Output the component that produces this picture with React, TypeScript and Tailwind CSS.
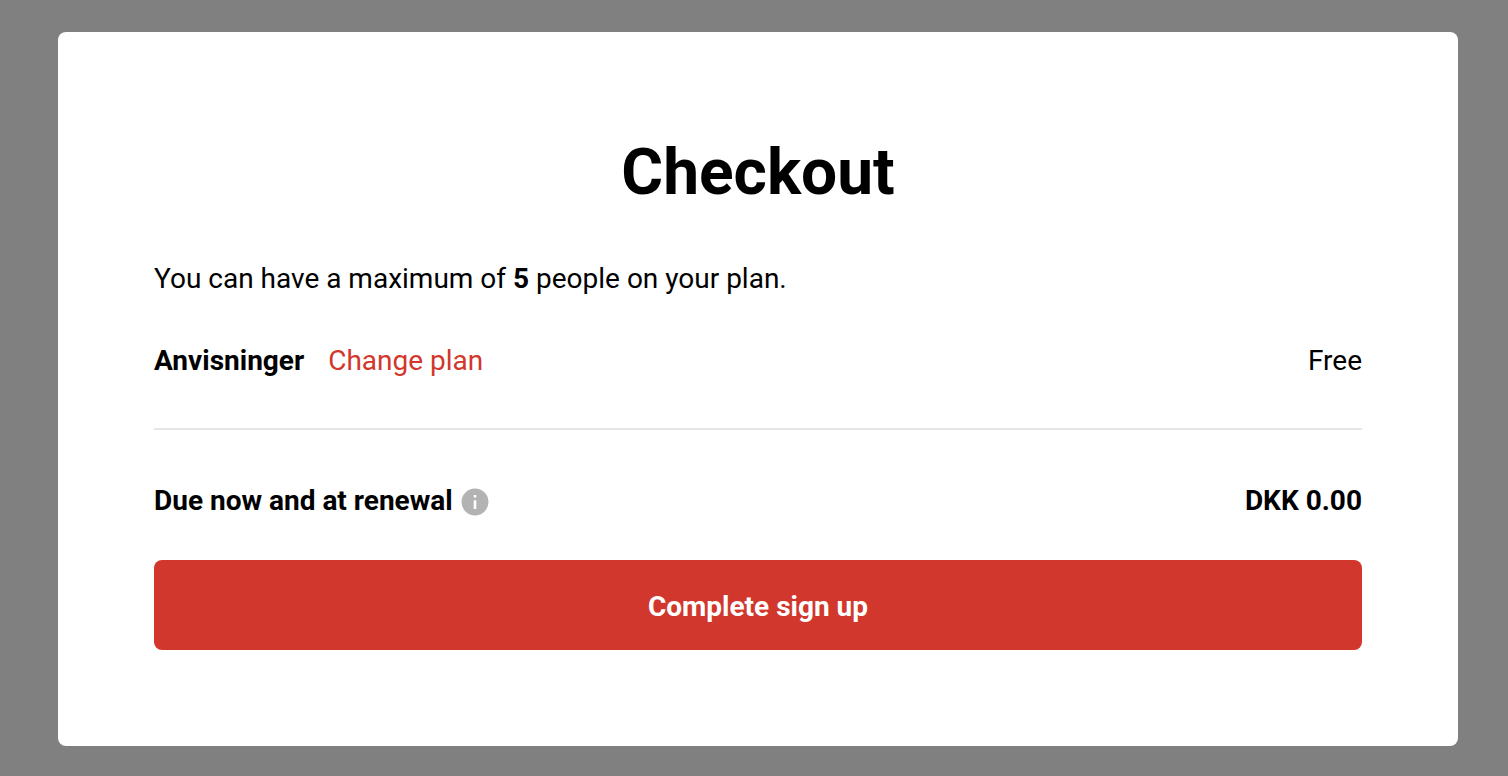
export default function App() {
  return (
    <div className="min-h-screen bg-[#808080] pt-8 pr-[50px] pb-[30px] pl-[58px] font-[Roboto,'Liberation_Sans',sans-serif] text-[28px] leading-[42px] text-black">
      <main className="rounded-lg bg-white p-24">
        <h1 className="text-center text-[64px] leading-[90px] font-bold">Checkout</h1>
        <p className="mt-10">
          You can have a maximum of <strong>5</strong> people on your plan.
        </p>
        <div className="mt-10 flex items-center justify-between border-b-2 border-[#e6e6e6] pb-[46px]">
          <div className="flex items-center gap-6">
            <strong>Anvisninger</strong>
            <a href="#plans" className="text-[#d1372c]">Change plan</a>
          </div>
          <span>Free</span>
        </div>
        <div className="mt-[50px] flex items-center justify-between font-bold">
          <div className="flex items-center gap-2">
            <span>Due now and at renewal</span>
            <button type="button" aria-label="About renewal" className="pt-0.5">
              <svg viewBox="0 0 28 28" className="block size-7" aria-hidden="true">
                <circle cx="14" cy="14" r="13.5" fill="#b3b3b3" />
                <path d="M12.7 7h2.6v2.6h-2.6zM12.7 12.3h2.6v8.7h-2.6z" fill="white" />
              </svg>
            </button>
          </div>
          <span>DKK 0.00</span>
        </div>
        <button type="button" className="mt-[38px] w-full rounded-lg bg-[#d1372c] pt-[26px] pb-[22px] font-bold text-white">
          Complete sign up
        </button>
      </main>
    </div>
  );
}
